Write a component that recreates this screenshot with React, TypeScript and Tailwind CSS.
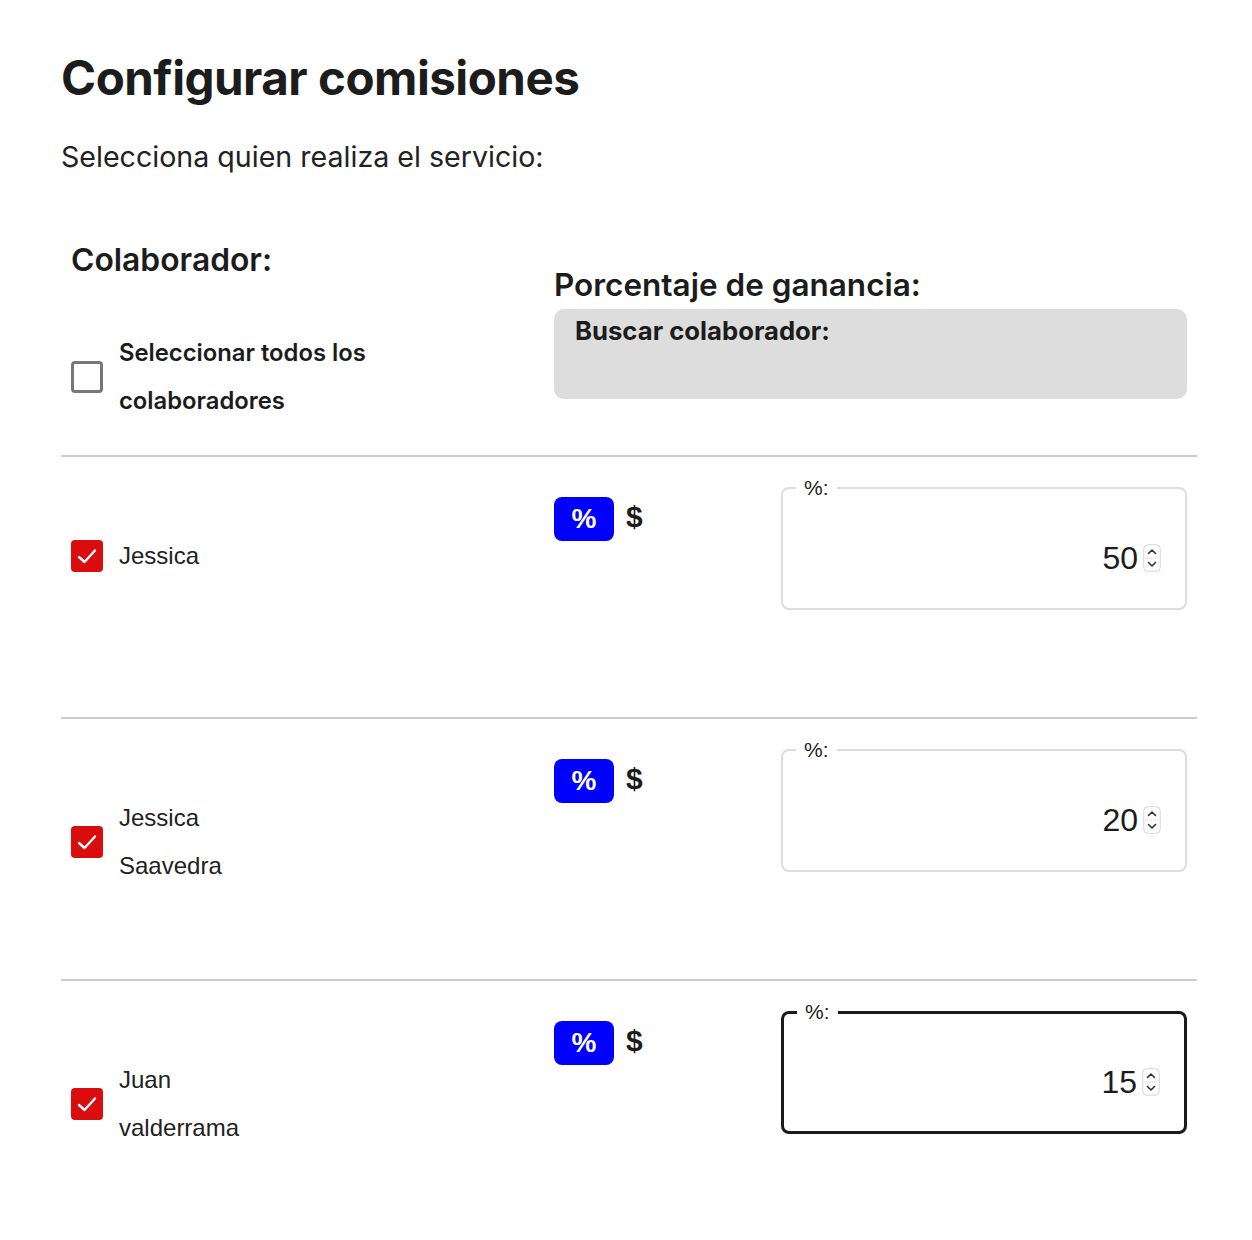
import { useState } from "react"

const collaborators = [
  { id: 1, name: ["Jessica"], value: "50", focused: false },
  { id: 2, name: ["Jessica", "Saavedra"], value: "20", focused: false },
  { id: 3, name: ["Juan", "valderrama"], value: "15", focused: true },
]

function Spinner() {
  return (
    <svg width="18" height="28" viewBox="0 0 18 28" className="shrink-0">
      <rect x="0.75" y="0.75" width="16.5" height="26.5" rx="4" fill="#fff" stroke="#d6d6d6" strokeWidth="1" />
      <line x1="2" y1="14" x2="16" y2="14" stroke="#cfcfcf" strokeWidth="1" strokeDasharray="1 1" />
      <path d="M5.5 9.5 L9 6 L12.5 9.5" fill="none" stroke="#333" strokeWidth="1.6" strokeLinecap="round" strokeLinejoin="round" />
      <path d="M5.5 18.5 L9 22 L12.5 18.5" fill="none" stroke="#333" strokeWidth="1.6" strokeLinecap="round" strokeLinejoin="round" />
    </svg>
  )
}

function RedCheck() {
  return (
    <span className="flex h-8 w-8 shrink-0 items-center justify-center rounded-[4px] bg-[#d90d0d]">
      <svg width="24" height="24" viewBox="0 0 24 24">
        <path d="M4 13 L9.5 18 L20 6.5" fill="none" stroke="#fff" strokeWidth="2.4" strokeLinecap="round" strokeLinejoin="round" />
      </svg>
    </span>
  )
}

export default function App() {
  const [values, setValues] = useState(collaborators.map((c) => c.value))

  return (
    <div className="min-h-[1240px] bg-white pl-[61px] pr-[55px] pt-[52px] text-[#1c1c1c] font-['Inter',sans-serif]">
      <h1 className="text-[47.5px] font-bold leading-[52px] tracking-[-0.5px]">
        Configurar comisiones
      </h1>
      <p className="mt-[35px] text-[28.6px] leading-[36px] text-[#222]">
        Selecciona quien realiza el servicio:
      </p>

      {/* header */}
      <div className="mt-[65px] grid grid-cols-[493px_1fr] pr-[10px] pb-[30px] border-b-2 border-[#cccccc]">
        <div className="pl-[10px]">
          <h2 className="text-[31.8px] font-semibold leading-[40px]">Colaborador:</h2>
          <label className="mt-[49px] flex items-center gap-4">
            <span className="h-8 w-8 shrink-0 rounded-[4px] border-[3px] border-[#777]" />
            <span className="text-[23.8px] font-semibold leading-[48px]">
              Seleccionar todos los
              <br />
              colaboradores
            </span>
          </label>
        </div>
        <div className="pt-[25px]">
          <h2 className="text-[31.5px] font-semibold leading-[40px]">Porcentaje de ganancia:</h2>
          <div className="mt-[4px] h-[90px] rounded-[10px] bg-[#dddddd] px-[21px] pt-[6px]">
            <span className="text-[25.7px] font-bold leading-[32px]">Buscar colaborador:</span>
          </div>
        </div>
      </div>

      {collaborators.map((c, i) => (
        <div
          key={c.id}
          className={
            "grid h-[262px] grid-cols-[493px_227px_1fr] pr-[10px] " +
            (i < collaborators.length - 1 ? "border-b-2 border-[#cccccc]" : "")
          }
        >
          <div className="pl-[10px] pt-[75px]">
            <div className="flex items-center gap-4">
              <RedCheck />
              <span className="font-['Liberation_Sans',sans-serif] text-[24px] leading-[48px] text-[#222]">
                {c.name.map((n, j) => (
                  <span key={j} className="block">{n}</span>
                ))}
              </span>
            </div>
          </div>

          <div className="flex items-start gap-3 pt-[40px]">
            <button className="flex h-[44px] w-[60px] items-center justify-center rounded-[8px] bg-[#0000ff] text-[28px] font-bold text-white font-['Liberation_Sans',sans-serif]">
              %
            </button>
            <span className="mt-[2px] text-[30px] font-bold leading-[36px] font-['Liberation_Sans',sans-serif]">$</span>
          </div>

          <div className="pt-[20px]">
            <fieldset
              className={
                "h-[133px] rounded-[8px] px-[13px] " +
                (c.focused ? "border-[3px] border-[#1a1a1a]" : "border-2 border-[#dddddd]")
              }
            >
              <legend className="px-2 text-[21px] leading-[22px] font-['Liberation_Sans',sans-serif] text-[#222]">
                %:
              </legend>
              <div className="mt-[40px] flex items-center justify-end gap-[5px] pr-[11px]">
                <input
                  type="number"
                  value={values[i]}
                  onChange={(e) => {
                    const next = [...values]
                    next[i] = e.target.value
                    setValues(next)
                  }}
                  className="w-[200px] bg-transparent text-right text-[32px] leading-[38px] outline-none font-['Liberation_Sans',sans-serif] text-[#1c1c1c] [appearance:textfield] [&::-webkit-inner-spin-button]:appearance-none [&::-webkit-outer-spin-button]:appearance-none"
                />
                <Spinner />
              </div>
            </fieldset>
          </div>
        </div>
      ))}
    </div>
  )
}
